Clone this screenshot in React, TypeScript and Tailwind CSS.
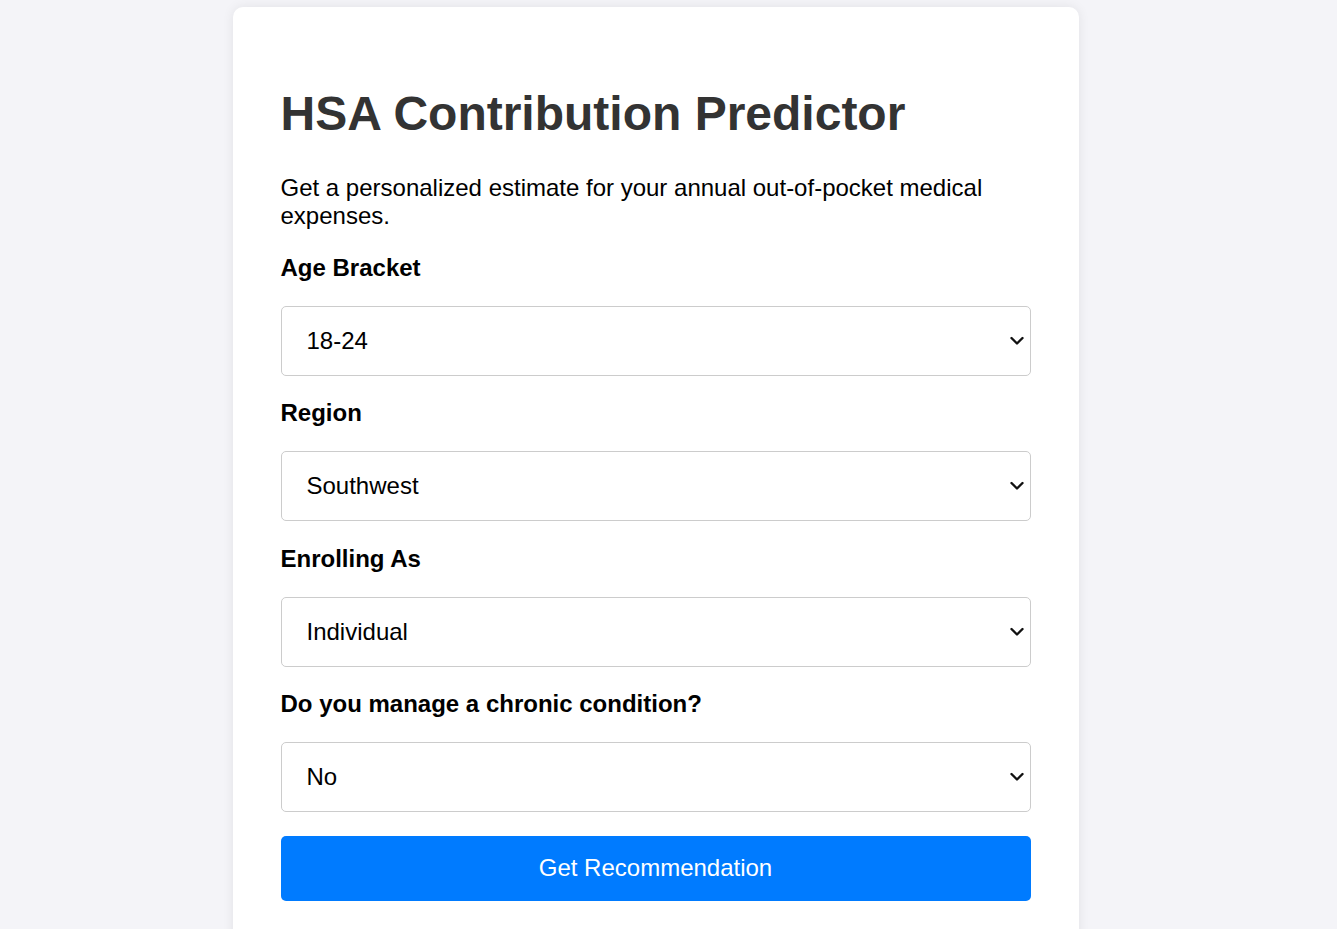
import React from "react";

const fields = [
  { label: "Age Bracket", value: "18-24", options: ["18-24", "25-34", "35-44", "45-54", "55-64", "65+"] },
  { label: "Region", value: "Southwest", options: ["Northeast", "Southeast", "Midwest", "Southwest", "West"] },
  { label: "Enrolling As", value: "Individual", options: ["Individual", "Family"] },
  { label: "Do you manage a chronic condition?", value: "No", options: ["No", "Yes"] },
];

const ff = { fontFamily: '"Liberation Sans", Arial, sans-serif' };

export default function App() {
  return (
    <div className="min-h-screen bg-[#f4f4f8] pt-[7px] pr-[26px]" style={ff}>
      <div className="mx-auto w-[846px] rounded-[10px] bg-white px-[48px] pt-[48px] pb-[48px] shadow-[0_0_12px_rgba(0,0,0,0.08)]">
        <h1 className="mt-[30px] text-[48px] font-bold leading-[1.2] text-[#333]">HSA Contribution Predictor</h1>
        <p className="mt-[31px] text-[24px] leading-[28px] text-black">
          Get a personalized estimate for your annual out-of-pocket medical expenses.
        </p>
        <div className="mt-[24px] flex flex-col">
          {fields.map((f) => (
            <div key={f.label} className="flex flex-col">
              <label className="text-[24px] font-bold leading-[28px] text-black">{f.label}</label>
              <div className="relative mt-[24px] mb-[23.6px]">
                <select
                  defaultValue={f.value}
                  className="h-[70px] w-full appearance-none rounded-[5px] border border-[#ccc] bg-white pl-[25px] pr-[40px] text-[24px] text-black outline-none"
                  style={ff}
                >
                  {f.options.map((o) => (
                    <option key={o}>{o}</option>
                  ))}
                </select>
                <svg
                  className="pointer-events-none absolute right-[7px] top-1/2 -translate-y-1/2"
                  width="14"
                  height="9"
                  viewBox="0 0 14 9"
                  fill="none"
                >
                  <path d="M1.5 1.5 L7 7 L12.5 1.5" stroke="#111" strokeWidth="2.4" strokeLinecap="round" strokeLinejoin="round" />
                </svg>
              </div>
            </div>
          ))}
        </div>
        <button className="h-[65px] w-full rounded-[5px] bg-[#007bff] text-[24px] text-white" style={ff}>
          Get Recommendation
        </button>
      </div>
    </div>
  );
}
